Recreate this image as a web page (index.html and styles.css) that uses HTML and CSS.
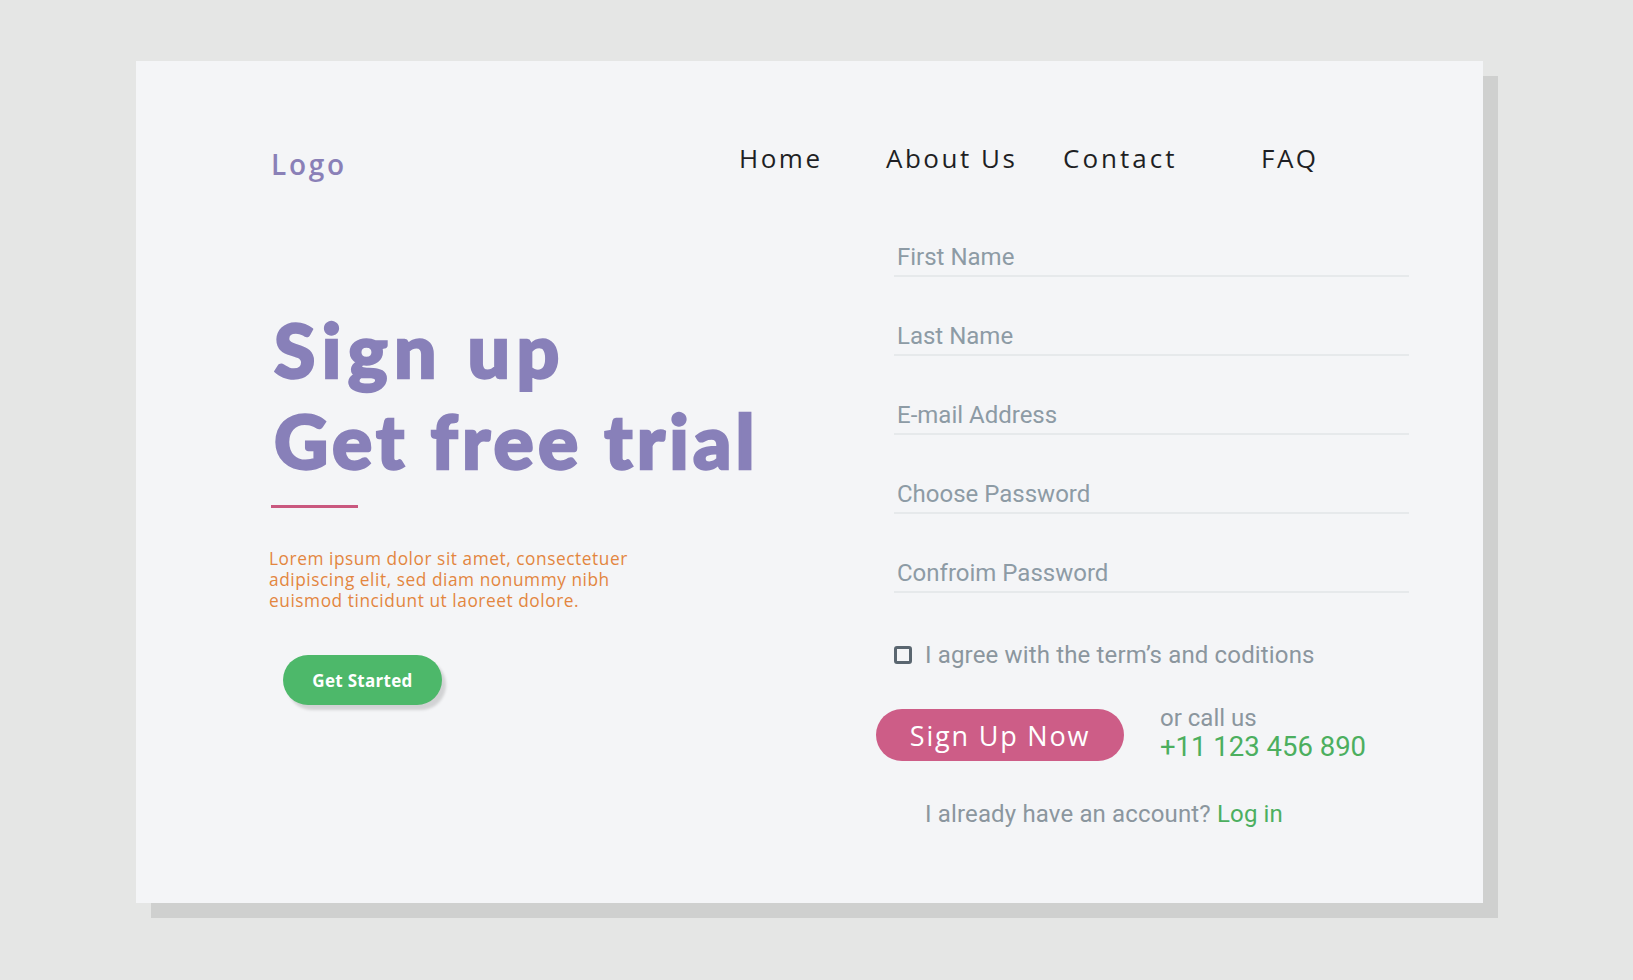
FILE: index.html
```html
<!DOCTYPE html>
<html lang="en">
<head>
<meta charset="utf-8">
<title>Sign up</title>
<link rel="stylesheet" href="styles.css">
</head>
<body>
<div class="page">
  <div class="card">
    <header class="header">
      <div class="logo">Logo</div>
      <nav class="nav">
        <a class="nav-item">Home</a>
        <a class="nav-item">About Us</a>
        <a class="nav-item">Contact</a>
        <a class="nav-item">FAQ</a>
      </nav>
    </header>
    <main class="main">
      <section class="intro">
        <h1 class="title"><span class="title-line">Sign up</span><span class="title-line title-line-2">Get free trial</span></h1>
        <div class="accent"></div>
        <p class="lead">Lorem ipsum dolor sit amet, consectetuer<br>adipiscing elit, sed diam nonummy nibh<br>euismod tincidunt ut laoreet dolore.</p>
        <button class="btn-start">Get Started</button>
      </section>
      <section class="form">
        <div class="field"><span class="label">First Name</span></div>
        <div class="field"><span class="label">Last Name</span></div>
        <div class="field"><span class="label">E-mail Address</span></div>
        <div class="field"><span class="label">Choose Password</span></div>
        <div class="field"><span class="label">Confroim Password</span></div>
        <div class="agree">
          <span class="checkbox"></span>
          <span class="agree-text">I agree with the term’s and coditions</span>
        </div>
        <div class="actions">
          <button class="btn-signup">Sign Up Now</button>
          <div class="call">
            <div class="call-label">or call us</div>
            <div class="call-phone">+11 123 456 890</div>
          </div>
        </div>
        <div class="login">I already have an account? <a class="login-link">Log in</a></div>
      </section>
    </main>
  </div>
</div>
</body>
</html>
```
FILE: styles.css
```css
* { box-sizing: border-box; }
html, body {
  margin: 0;
  padding: 0;
  background: #e5e6e5;
}
body {
  width: 1633px;
  height: 980px;
  overflow: hidden;
  font-family: "Open Sans", "Liberation Sans", sans-serif;
}
.page {
  padding: 61px 0 0 136px;
}
.card {
  width: 1347px;
  height: 842px;
  background: #f4f5f7;
  box-shadow: 15px 15px 0 #cfd0cf;
  padding: 0 74px 0 135px;
}
.header {
  display: flex;
  align-items: center;
  padding-top: 80px;
  height: 118px;
}
.logo {
  width: 468px;
  font-size: 28px;
  font-weight: 600;
  color: #8a80b7;
  letter-spacing: 2.7px;
  margin-top: 8px;
}
.nav {
  display: grid;
  grid-template-columns: 147px 177px 198px auto;
  margin-top: -4px;
}
.nav-item {
  font-size: 26px;
  font-weight: 400;
  letter-spacing: 2.5px;
  color: #1e1f24;
  line-height: 38px;
}
.nav-item:nth-child(3) {
  letter-spacing: 3px;
}
.main {
  display: grid;
  grid-template-columns: 623px 515px;
  margin-top: 64px;
}
.intro {
  padding-top: 61px;
}
.title {
  margin: 0 0 0 3px;
  font-family: Lato, "Open Sans", sans-serif;
  font-size: 75px;
  font-weight: 900;
  line-height: 91px;
  color: #8880b9;
  -webkit-text-stroke: 2.4px #8880b9;
}
.title-line {
  display: block;
  letter-spacing: 6.5px;
}
.title-line-2 {
  letter-spacing: 4.2px;
}
.accent {
  width: 87px;
  height: 3px;
  background: #c9587f;
  margin-top: 19px;
}
.lead {
  margin: 40px 0 0 -2px;
  font-size: 17.3px;
  line-height: 21px;
  color: #e3863f;
  letter-spacing: 0.55px;
}
.btn-start {
  margin: 44px 0 0 12px;
  width: 159px;
  height: 50px;
  border: none;
  border-radius: 25px;
  background: #4db86a;
  color: #fff;
  font-family: "Open Sans", sans-serif;
  font-size: 17px;
  font-weight: 700;
  letter-spacing: 0.3px;
  box-shadow: 4px 5px 3px rgba(0, 0, 0, 0.14);
}
.form {
  font-family: Roboto, "Liberation Sans", sans-serif;
}
.field {
  padding: 0 0 4px 3px;
  border-bottom: 2px solid #e6e9eb;
  margin-bottom: 45px;
}
.label {
  display: block;
  font-size: 24px;
  line-height: 28px;
  color: #8d9ba5;
}
.agree {
  display: flex;
  align-items: center;
  gap: 13px;
  height: 34px;
}
.checkbox {
  width: 18px;
  height: 18px;
  border: 3px solid #5a6670;
  border-radius: 3px;
  flex: none;
}
.agree-text {
  font-size: 24px;
  letter-spacing: 0.15px;
  color: #8b969e;
}
.actions {
  display: flex;
  align-items: center;
  gap: 36px;
  margin: 34px 0 0 -18px;
}
.btn-signup {
  width: 248px;
  height: 52px;
  border: none;
  border-radius: 26px;
  background: #cd5d87;
  color: #fff;
  font-family: "Open Sans", sans-serif;
  font-size: 27px;
  font-weight: 400;
  letter-spacing: 1.8px;
}
.call-label {
  font-size: 24px;
  line-height: 24px;
  color: #8b969e;
}
.call-phone {
  font-size: 27.5px;
  line-height: 34px;
  color: #4caf5f;
}
.login {
  margin: 36px 0 0 31px;
  font-size: 24px;
  letter-spacing: 0.15px;
  line-height: 28px;
  color: #8b969e;
}
.login-link {
  color: #4caf5f;
}
```
